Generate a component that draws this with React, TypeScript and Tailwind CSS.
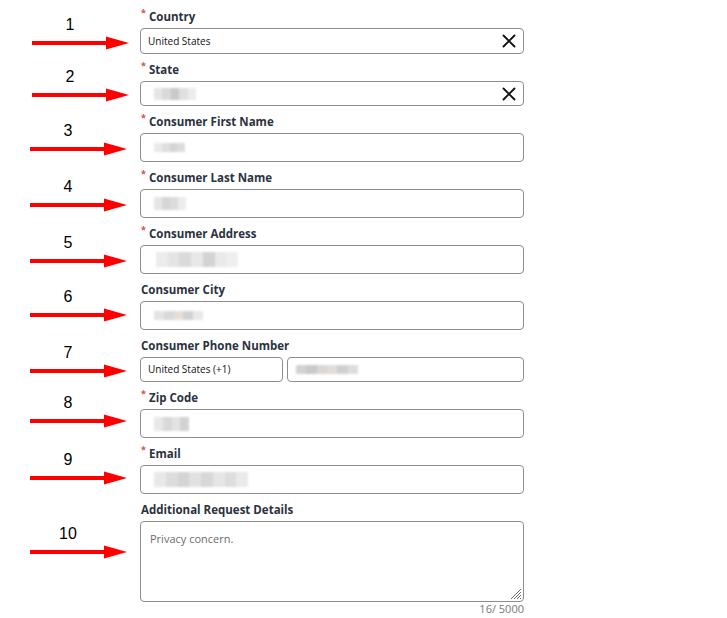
import React from "react";

type Field = {
  n: string;
  label: string;
  required: boolean;
  annot: string;
  kind: "input" | "phone" | "textarea";
  inputH: string;
  value?: string;
  clear?: boolean;
  redact?: string[];
  redactBox?: string;
};

const fields: Field[] = [
  { n: "1", label: "Country", required: true, annot: "mt-[8px] ml-[32px]", kind: "input", inputH: "h-[26px]", value: "United States", clear: true },
  { n: "2", label: "State", required: true, annot: "mt-[7px] ml-[32px]", kind: "input", inputH: "h-[25px]", clear: true, redact: ["#e6e6e6", "#d9d9d9", "#c9c9c9", "#e0e0e0", "#ececec"], redactBox: "w-[42px] h-[12px] ml-[6px] mt-[1px]" },
  { n: "3", label: "Consumer First Name", required: true, annot: "mt-[9px] ml-[30px]", kind: "input", inputH: "h-[29px]", redact: ["#e9e9e9", "#dedede", "#d4d4d4", "#dcdcdc"], redactBox: "w-[31px] h-[9px] ml-[6px]" },
  { n: "4", label: "Consumer Last Name", required: true, annot: "mt-[9px] ml-[30px]", kind: "input", inputH: "h-[29px]", redact: ["#e6e6e6", "#d6d6d6", "#dcdcdc", "#ececec"], redactBox: "w-[32px] h-[13px] ml-[6px]" },
  { n: "5", label: "Consumer Address", required: true, annot: "mt-[9px] ml-[30px]", kind: "input", inputH: "h-[29px]", redact: ["#ececec", "#e4e4e4", "#dadada", "#e8e8e8", "#d3d3d3", "#e9e9e9", "#efefef"], redactBox: "w-[82px] h-[15px] ml-[8px]" },
  { n: "6", label: "Consumer City", required: false, annot: "mt-[7px] ml-[30px]", kind: "input", inputH: "h-[29px]", redact: ["#e4e4e4", "#d9d9d9", "#e6dfd6", "#d2d2d2", "#e8e8e8"], redactBox: "w-[49px] h-[9px] ml-[6px]" },
  { n: "7", label: "Consumer Phone Number", required: false, annot: "mt-[7px] ml-[30px]", kind: "phone", inputH: "h-[25px]", value: "United States (+1)", redact: ["#d2d2d2", "#c9c9c9", "#d8d8d8", "#e2ddd8", "#d0d0d0", "#dddddd"], redactBox: "w-[62px] h-[9px] ml-[8px]" },
  { n: "8", label: "Zip Code", required: true, annot: "mt-[5px] ml-[30px]", kind: "input", inputH: "h-[29px]", redact: ["#e8e8e8", "#d9d9d9", "#e3e3e3", "#d2d2d2"], redactBox: "w-[35px] h-[14px] ml-[6px]" },
  { n: "9", label: "Email", required: true, annot: "mt-[6px] ml-[30px]", kind: "input", inputH: "h-[29px]", redact: ["#e8e8e8", "#dcdcdc", "#d4d4d4", "#e2e2e2", "#d8d8d8", "#e6e6e6", "#dddddd", "#eaeaea"], redactBox: "w-[94px] h-[15px] ml-[6px]" },
  { n: "10", label: "Additional Request Details", required: false, annot: "mt-[24px] ml-[30px]", kind: "textarea", inputH: "h-[81px]", value: "Privacy concern." },
];

function Arrow() {
  return (
    <svg width="97" height="14" viewBox="0 0 97 14" className="block">
      <rect x="0" y="5" width="76" height="4" fill="#ff0000" />
      <polygon points="74,0.5 97,7 74,13.5" fill="#ff0000" />
    </svg>
  );
}

function XIcon() {
  return (
    <svg width="14" height="14" viewBox="0 0 14 14" className="block">
      <path d="M1.5 1.5 L12.5 12.5 M12.5 1.5 L1.5 12.5" stroke="#111" strokeWidth="1.9" strokeLinecap="round" />
    </svg>
  );
}

function Redacted({ shades, box }: { shades: string[]; box: string }) {
  return (
    <div className={`flex ${box} blur-[1px]`}>
      {shades.map((c, i) => (
        <div key={i} className="flex-1 h-full" style={{ backgroundColor: c }} />
      ))}
    </div>
  );
}

function ResizeHandle() {
  return (
    <svg width="12" height="12" viewBox="0 0 12 12" className="block">
      <path d="M11 1 L1 11 M11 4 L4 11 M11 7 L7 11 M11 10 L10 11" stroke="#6f6f6f" strokeWidth="1" />
    </svg>
  );
}

export default function App() {
  return (
    <div
      className="w-[727px] h-[618px] bg-white pt-[9px] flex flex-col gap-[8px]"
      style={{ fontFamily: '"Open Sans", "Noto Sans", sans-serif' }}
    >
      {fields.map((f) => (
        <div key={f.n} className="flex">
          <div className="w-[140px] shrink-0">
            <div className={`flex flex-col w-[97px] ${f.annot}`}>
              <div
                className="w-[20px] ml-[28px] h-[16px] leading-[16px] text-[16px] text-center text-black"
                style={{ fontFamily: '"Liberation Sans", Arial, sans-serif' }}
              >
                {f.n}
              </div>
              <div className="mt-[3px]">
                <Arrow />
              </div>
            </div>
          </div>
          <div className="w-[384px] flex flex-col">
            <div className="flex h-[16px] leading-[16px] text-[11.5px] font-bold text-[#2b3240] mb-[3px]">
              {f.required ? (
                <span className="w-[9px] pl-[1px] text-[#d0504a] text-[9px] leading-[9px] -mt-[1px]">*</span>
              ) : (
                <span className="w-[1px]" />
              )}
              <span>{f.label}</span>
            </div>
            {f.kind === "input" && (
              <div className={`${f.inputH} border border-[#8e8e8e] rounded-[4px] flex items-center pl-[7px] pr-[7px]`}>
                {f.value ? (
                  <span className="text-[10px] text-[#111] flex-1">{f.value}</span>
                ) : (
                  <div className="flex-1 flex items-center">
                    {f.redact && f.redactBox && <Redacted shades={f.redact} box={f.redactBox} />}
                  </div>
                )}
                {f.clear && <XIcon />}
              </div>
            )}
            {f.kind === "phone" && (
              <div className="flex gap-[4px]">
                <div className={`${f.inputH} w-[143px] border border-[#8e8e8e] rounded-[4px] flex items-center pl-[7px]`}>
                  <span className="text-[10px] text-[#111]">{f.value}</span>
                </div>
                <div className={`${f.inputH} flex-1 border border-[#8e8e8e] rounded-[4px] flex items-center`}>
                  {f.redact && f.redactBox && <Redacted shades={f.redact} box={f.redactBox} />}
                </div>
              </div>
            )}
            {f.kind === "textarea" && (
              <>
                <div className={`${f.inputH} border border-[#8e8e8e] rounded-[4px] pl-[9px] pt-[9px] flex flex-col`}>
                  <span className="text-[11px] leading-[16px] text-[#6b6b6b]">{f.value}</span>
                  <div className="mt-auto self-end mb-[1px] mr-[1px]">
                    <ResizeHandle />
                  </div>
                </div>
                <div className="text-right text-[11px] leading-[14px] text-[#777]">16/ 5000</div>
              </>
            )}
          </div>
        </div>
      ))}
    </div>
  );
}
